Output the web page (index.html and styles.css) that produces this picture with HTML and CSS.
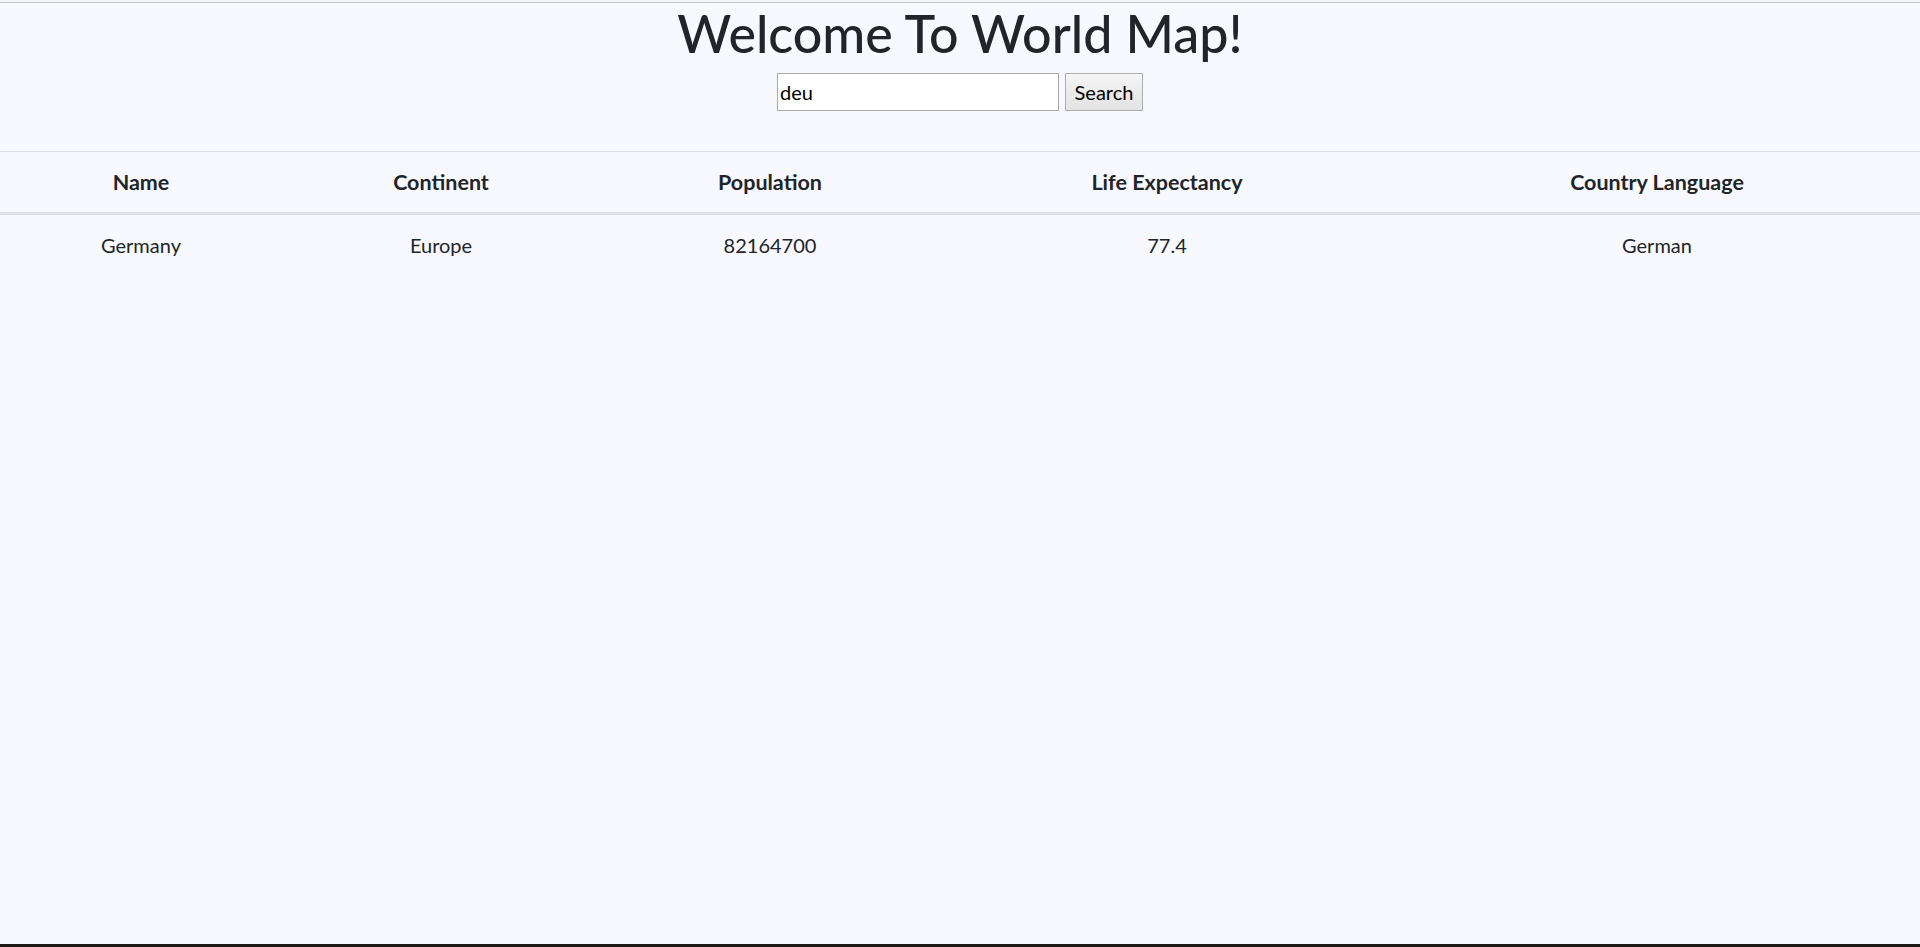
FILE: index.html
```html
<!DOCTYPE html>
<html>
<head>
<meta charset="utf-8">
<title>World Map</title>
<link rel="stylesheet" href="styles.css">
</head>
<body>
<div class="page">
  <header class="hero">
    <h1 class="title">Welcome To World Map!</h1>
    <form class="search">
      <input class="search-input" type="text" value="deu">
      <button class="search-btn" type="button">Search</button>
    </form>
  </header>
  <table class="grid">
    <colgroup>
      <col class="c1"><col class="c2"><col class="c3"><col class="c4"><col class="c5">
    </colgroup>
    <thead>
      <tr><th>Name</th><th>Continent</th><th>Population</th><th>Life Expectancy</th><th>Country Language</th></tr>
    </thead>
    <tbody>
      <tr><td>Germany</td><td>Europe</td><td>82164700</td><td>77.4</td><td>German</td></tr>
    </tbody>
  </table>
  <div class="taskbar"></div>
</div>
</body>
</html>
```
FILE: styles.css
```css
html, body {
  margin: 0;
  padding: 0;
}
body {
  background: #f7f9fe;
  color: #212529;
  font-family: Lato, "Open Sans", sans-serif;
  font-size: 20px;
  line-height: 1.5;
}
.page {
  height: 947px;
  display: flex;
  flex-direction: column;
  box-sizing: border-box;
  border-top: 2px solid #f7f7f7;
}
.hero {
  border-top: 1px solid #c4c4c4;
  text-align: center;
  padding-bottom: 40px;
}
.title {
  margin: 0 0 10px;
  font-size: 52px;
  font-weight: 500;
  line-height: 60px;
}
.search {
  display: flex;
  justify-content: center;
  gap: 6px;
  margin: 0;
}
.search-input {
  box-sizing: border-box;
  width: 282px;
  height: 38px;
  border: 1px solid #a9a9a9;
  background: #fff;
  font: inherit;
  font-size: 20px;
  color: #000;
  padding: 0 2px;
}
.search-btn {
  box-sizing: border-box;
  width: 78px;
  height: 38px;
  border: 1px solid #adadad;
  background: linear-gradient(#f5f5f5, #e3e3e3);
  font: inherit;
  font-size: 20px;
  color: #000;
  padding: 0;
}
.grid {
  width: 100%;
  border-collapse: collapse;
  table-layout: fixed;
}
.c1 { width: 282px; }
.c2 { width: 318px; }
.c3 { width: 340px; }
.c4 { width: 454px; }
.c5 { width: 526px; }
.grid th, .grid td {
  text-align: center;
  padding: 15px;
  line-height: 30px;
}
.grid th {
  font-size: 21.5px;
  font-weight: 700;
  border-top: 1px solid #dee2e6;
  border-bottom: 3px solid #dee2e6;
}
.taskbar {
  margin-top: auto;
  height: 3px;
  background: #1b1a16;
}
```
